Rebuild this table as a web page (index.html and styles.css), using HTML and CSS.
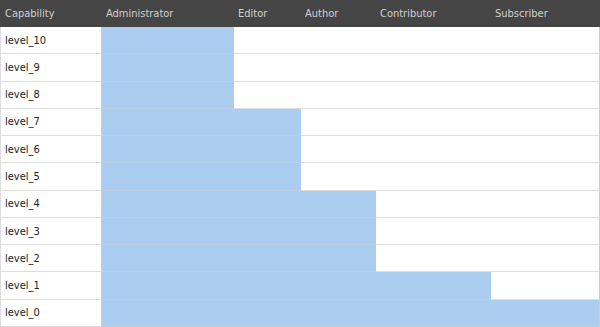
FILE: index.html
```html
<!DOCTYPE html>
<html lang="en">
<head>
    <meta charset="UTF-8">
    <meta name="viewport" content="width=device-width, initial-scale=1.0">
    <title>Role Capabilities</title>
    <link rel="stylesheet" href="styles.css">
</head>
<body>
    <div class="caps">
        <div class="head">Capability</div>
        <div class="head">Administrator</div>
        <div class="head">Editor</div>
        <div class="head">Author</div>
        <div class="head">Contributor</div>
        <div class="head last">Subscriber</div>

        <div class="name">level_10</div>
        <div class="cell on"></div><div class="cell"></div><div class="cell"></div><div class="cell"></div><div class="cell last"></div>

        <div class="name">level_9</div>
        <div class="cell on"></div><div class="cell"></div><div class="cell"></div><div class="cell"></div><div class="cell last"></div>

        <div class="name">level_8</div>
        <div class="cell on"></div><div class="cell"></div><div class="cell"></div><div class="cell"></div><div class="cell last"></div>

        <div class="name">level_7</div>
        <div class="cell on"></div><div class="cell on"></div><div class="cell"></div><div class="cell"></div><div class="cell last"></div>

        <div class="name">level_6</div>
        <div class="cell on"></div><div class="cell on"></div><div class="cell"></div><div class="cell"></div><div class="cell last"></div>

        <div class="name">level_5</div>
        <div class="cell on"></div><div class="cell on"></div><div class="cell"></div><div class="cell"></div><div class="cell last"></div>

        <div class="name">level_4</div>
        <div class="cell on"></div><div class="cell on"></div><div class="cell on"></div><div class="cell"></div><div class="cell last"></div>

        <div class="name">level_3</div>
        <div class="cell on"></div><div class="cell on"></div><div class="cell on"></div><div class="cell"></div><div class="cell last"></div>

        <div class="name">level_2</div>
        <div class="cell on"></div><div class="cell on"></div><div class="cell on"></div><div class="cell"></div><div class="cell last"></div>

        <div class="name">level_1</div>
        <div class="cell on"></div><div class="cell on"></div><div class="cell on"></div><div class="cell on"></div><div class="cell last"></div>

        <div class="name">level_0</div>
        <div class="cell on"></div><div class="cell on"></div><div class="cell on"></div><div class="cell on"></div><div class="cell on last"></div>
    </div>
</body>
</html>
```

FILE: styles.css
```css
* {
    box-sizing: border-box;
}
body {
    margin: 0;
    background: #fff;
    font-family: "DejaVu Sans Condensed", "DejaVu Sans", Verdana, sans-serif;
    font-size: 11px;
}
.caps {
    display: grid;
    grid-template-columns: 102px 132px 67px 75px 115px 109px;
    grid-template-rows: 27px repeat(11, 1fr);
    width: 600px;
    height: 327px;
}
.head {
    background: #454545;
    color: #cfcfcf;
    padding: 0 4px;
    display: flex;
    align-items: center;
}
.head:first-child {
    padding-left: 5px;
}
.name {
    color: #222;
    padding-left: 4px;
    border-left: 1px solid #ddd;
    border-right: 1px solid #ccc;
    border-bottom: 1px solid #ddd;
    display: flex;
    align-items: center;
}
.cell {
    background: #fff;
    border-bottom: 1px solid #ddd;
}
.cell.on {
    background: #abcdef;
    border-bottom-color: #bccfe2;
}
.cell.last {
    border-right: 1px solid #ccc;
}
```
